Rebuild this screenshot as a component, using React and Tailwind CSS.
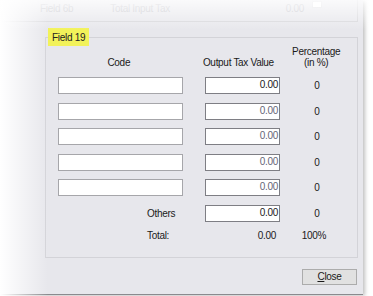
import React from "react";

const rows = [
  { mt: "mt-[9px]", dim: false },
  { mt: "mt-[9px]", dim: true },
  { mt: "mt-[8px]", dim: true },
  { mt: "mt-[9px]", dim: true },
  { mt: "mt-[8px]", dim: true },
];

const App = () => {
  return (
    <div className="relative w-[373px] h-[296px] overflow-hidden bg-white font-['Liberation_Sans',Arial,sans-serif] text-[10px] tracking-[-0.3px] text-[#1a1a1a]">
      {/* dialog body */}
      <div className="w-[363px] h-[295px] bg-[#e7e7ec] border-b border-[#8a8a8e] shadow-[2px_1px_4px_rgba(0,0,0,0.25)] flex flex-col">
        {/* faded group box above */}
        <div className="h-[22px] w-[358px] border-r border-b border-[#d6d6da] flex items-start pt-[1px] text-[#c4c4ca]">
          <span className="ml-[40px]">Field 6b</span>
          <span className="ml-[37px]">Total Input Tax</span>
          <span className="ml-auto mr-[8px]">0.00</span>
          <span className="w-[10px] h-[7px] bg-white border border-[#e0e0e4] mr-[35px]"></span>
        </div>

        {/* Field 19 group */}
        <div className="relative ml-[45px] mt-[15px] w-[313px] h-[221px] border border-[#d3d3d8] flex flex-col">
          <div className="absolute left-[2px] -top-[10px] h-[18px] px-[4px] bg-[#f2f25a] flex items-center text-[#222]">
            Field 19
          </div>

          {/* headers */}
          <div className="flex items-end mt-[8px] pl-[12px] leading-[11px]">
            <div className="w-[122px] text-center">Code</div>
            <div className="w-[22px]"></div>
            <div className="w-[74px] text-center whitespace-nowrap">Output Tax Value</div>
            <div className="w-[82px] text-center">
              Percentage
              <br />
              (in %)
            </div>
          </div>

          {rows.map((r, i) => (
            <div key={i} className={`flex items-center h-[17px] pl-[12px] ${r.mt}`}>
              <div className="w-[125px] h-[17px] bg-white border border-[#a6a6aa]"></div>
              <div className="w-[22px]"></div>
              <div className="w-[75px] h-[17px] bg-white border border-[#7e7e84] flex items-start justify-end pr-[1px] leading-[14px]">
                <span className={r.dim ? "text-[#666676]" : "text-[#1a1a1a]"}>0.00</span>
              </div>
              <div className="w-[74px] text-center">0</div>
            </div>
          ))}

          {/* Others */}
          <div className="flex items-center h-[17px] pl-[12px] mt-[9px]">
            <div className="w-[125px] pl-[89px]">Others</div>
            <div className="w-[22px]"></div>
            <div className="w-[75px] h-[17px] bg-white border border-[#7e7e84] flex items-start justify-end pr-[1px] leading-[14px]">
              0.00
            </div>
            <div className="w-[74px] text-center">0</div>
          </div>

          {/* Total */}
          <div className="flex items-center h-[13px] pl-[12px] mt-[7px]">
            <div className="w-[125px] pl-[89px]">Total:</div>
            <div className="w-[22px]"></div>
            <div className="w-[75px] text-right pr-[4px]">0.00</div>
            <div className="w-[68px] text-center">100%</div>
          </div>
        </div>

        {/* Close button */}
        <div className="flex justify-end mt-[11px] pr-[6px]">
          <button className="w-[55px] h-[16px] bg-[#e1e1e1] border border-[#acacac] flex items-center justify-center leading-none text-[#1a1a1a]">
            <span>
              <span className="underline">C</span>lose
            </span>
          </button>
        </div>
      </div>

      {/* left fade */}
      <div className="absolute left-0 top-0 w-[48px] h-[296px] bg-gradient-to-r from-white via-white/50 to-transparent pointer-events-none"></div>
      {/* top fade */}
      <div className="absolute left-0 top-0 w-[373px] h-[30px] bg-gradient-to-b from-white/80 to-transparent pointer-events-none"></div>
    </div>
  );
};

export default App;
